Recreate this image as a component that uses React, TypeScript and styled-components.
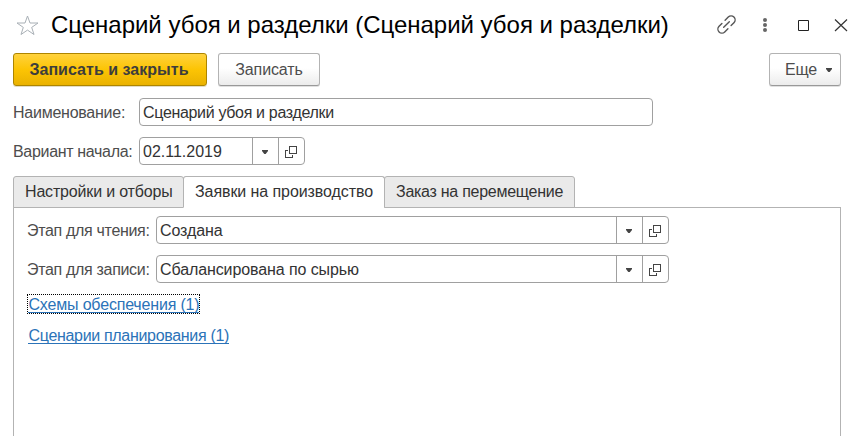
import React from "react";
import styled, { createGlobalStyle, css } from "styled-components";

const GlobalStyle = createGlobalStyle`
  *, *::before, *::after { box-sizing: border-box; }
  html, body { margin: 0; padding: 0; background: #fff; overflow: hidden; }
  body { font: 16px/20px "Liberation Sans", Arial, sans-serif; color: #333; }
  button, input { font: inherit; color: inherit; }
`;

const Window = styled.main`
  width: 864px;
  height: 436px;
  padding: 0 23px 0 13px;
  display: flex;
  flex-direction: column;
  overflow: hidden;
  background: #fff;
`;

const TitleBar = styled.header`
  height: 53px;
  flex: none;
  display: flex;
  align-items: flex-start;
  margin-right: -8px;
`;

const Title = styled.h1<{ $spacing: number }>`
  margin: 10px auto 0 10px;
  font-size: 24px;
  line-height: 30px;
  font-weight: 400;
  color: #000;
  white-space: nowrap;
  letter-spacing: ${(p) => p.$spacing}px;
`;

const TitleIcons = styled.div`
  display: flex;
  height: 50px;
`;

const Icon = styled.svg`
  display: block;
  flex: none;
`;

const Toolbar = styled.div`
  display: flex;
  flex: none;
  height: 33px;
  gap: 11px;
`;

const Button = styled.button<{ $primary?: boolean; $width: number; $right?: boolean; $spacing?: number }>`
  width: ${(p) => p.$width}px;
  height: 33px;
  padding: 1px 0 0;
  display: flex;
  align-items: center;
  justify-content: center;
  border: 1px solid #b3b3b3;
  border-bottom-color: #999;
  border-radius: 3px;
  color: #4d4d4d;
  background: linear-gradient(#fff 45%, #ececec);
  box-shadow: 0 1px 0 #e0e0e0;
  white-space: nowrap;
  letter-spacing: ${(p) => p.$spacing ?? 0}px;
  ${(p) => p.$right && css`margin-left: auto; gap: 9px; padding-left: 7px;`}
  ${(p) =>
    p.$primary &&
    css`
      padding-right: 2px;
      font-weight: 700;
      color: #3d3d3d;
      border-color: #ad8500;
      background: linear-gradient(#ffd23d, #fcc404 50%, #eab200);
      box-shadow: 0 1px 0 #e3dcc5;
    `}
`;

const Row = styled.div<{ $top: number; $label: number }>`
  display: grid;
  flex: none;
  grid-template-columns: ${(p) => p.$label}px max-content;
  align-items: center;
  height: 28px;
  margin-top: ${(p) => p.$top}px;
`;

const Label = styled.label<{ $spacing?: number }>`
  padding-top: 2px;
  color: #4d4d4d;
  white-space: nowrap;
  letter-spacing: ${(p) => p.$spacing ?? 0}px;
`;

const Field = styled.div<{ $width: number }>`
  display: flex;
  width: ${(p) => p.$width}px;
  height: 28px;
  border: 1px solid #a0a0a0;
  border-radius: 4px;
  background: #fff;
`;

const Input = styled.input<{ $spacing?: number }>`
  flex: 1;
  min-width: 0;
  padding: 2px 0 0 3px;
  border: 0;
  outline: 0;
  background: transparent;
  letter-spacing: ${(p) => p.$spacing ?? 0}px;
`;

const FieldButton = styled.button`
  width: 26px;
  height: 26px;
  padding: 2px 1px 0 0;
  display: grid;
  place-items: center;
  border: 0;
  border-left: 1px solid #a0a0a0;
  background: transparent;
`;

const Tabs = styled.div`
  display: flex;
  flex: none;
  height: 32px;
  margin-top: 11px;
  position: relative;
  z-index: 1;
`;

const Tab = styled.button<{ $active?: boolean; $width: number; $spacing?: number }>`
  width: ${(p) => p.$width}px;
  height: 32px;
  margin-right: -1px;
  padding: 0 0 1px 11px;
  text-align: left;
  white-space: nowrap;
  border: 1px solid #b3b3b3;
  border-bottom-color: ${(p) => (p.$active ? "#fff" : "#b3b3b3")};
  border-radius: 3px 3px 0 0;
  background: ${(p) => (p.$active ? "#fff" : "#eaeaea")};
  letter-spacing: ${(p) => p.$spacing ?? 0}px;
`;

const Panel = styled.section`
  flex: 1;
  margin-top: -1px;
  padding: 0 13px;
  border: 1px solid #b3b3b3;
  border-bottom: 0;
  display: flex;
  flex-direction: column;
  align-items: flex-start;
`;

const Link = styled.a<{ $focused?: boolean; $top: number; $spacing?: number }>`
  margin-top: ${(p) => p.$top}px;
  height: 20px;
  border: 1px dotted ${(p) => (p.$focused ? "#000" : "transparent")};
  color: #2b73b8;
  text-decoration: none;
  line-height: 20px;
  white-space: nowrap;
  letter-spacing: ${(p) => p.$spacing ?? 0}px;
  span { display: block; height: 18px; padding-left: 0.5px; border-bottom: 1px solid #2b73b8; }
`;

const Caret = () => (
  <Icon width="6" height="4" viewBox="0 0 6 4"><path d="M0 0h6v1L3.7 4H2.3L0 1z" fill="#444" /></Icon>
);

const OpenIcon = () => (
  <Icon width="12" height="12" viewBox="0 0 12 12" fill="none" stroke="#444" shapeRendering="crispEdges">
    <path d="M4.5.5h7v7h-7zM3 4.5H.5v7h7V9" />
  </Icon>
);

const Combo = ({ id, value, width, spacing }: { id: string; value: string; width: number; spacing?: number }) => (
  <Field $width={width}>
    <Input id={id} defaultValue={value} $spacing={spacing} />
    <FieldButton aria-label="Выбрать"><Caret /></FieldButton>
    <FieldButton aria-label="Открыть"><OpenIcon /></FieldButton>
  </Field>
);

export default function App() {
  return (
    <>
      <GlobalStyle />
      <Window>
        <TitleBar>
          <Icon width="28" height="50" viewBox="0 0 28 50" fill="none" stroke="#a9b0b6">
            <path d="M14.5 16l2.5 7h8l-6.3 4.4 2.3 7.1-6.5-4.4L8 34.5l2.3-7.1L4 23h8z" />
          </Icon>
          <Title $spacing={-0.02}>Сценарий убоя и разделки (Сценарий убоя и разделки)</Title>
          <TitleIcons>
            <Icon width="134" height="50" viewBox="715 0 134 50" fill="none">
              <g transform="translate(726.5 24.5) rotate(-45)" stroke="#555" strokeWidth="1.4" strokeLinecap="round">
                <path d="M-4 0H4M-2.5-4h-4a4 4 0 0 0 0 8h4.5M2-4h4.5a4 4 0 0 1 0 8h-4" />
              </g>
              <g fill="#666"><circle cx="765" cy="20" r="2" /><circle cx="765" cy="25" r="2" /><circle cx="765" cy="30" r="2" /></g>
              <path d="M798.5 20.5h10v10h-10z" stroke="#222" />
              <path d="M835 19.5l12 11.5M847 19.5L835 31" stroke="#333" strokeWidth="1.2" />
            </Icon>
          </TitleIcons>
        </TitleBar>
        <Toolbar>
          <Button $primary $width={194} $spacing={0.03}>Записать и закрыть</Button>
          <Button $width={102} $spacing={-0.1}>Записать</Button>
          <Button $width={72} $right $spacing={-0.2}>Еще <Caret /></Button>
        </Toolbar>
        <Row $top={12} $label={126}>
          <Label htmlFor="name" $spacing={-0.25}>Наименование:</Label>
          <Field $width={514}><Input id="name" defaultValue="Сценарий убоя и разделки" $spacing={-0.33} /></Field>
        </Row>
        <Row $top={11} $label={126}>
          <Label htmlFor="start" $spacing={-0.32}>Вариант начала:</Label>
          <Combo id="start" value="02.11.2019" width={166} />
        </Row>
        <Tabs>
          <Tab $width={171} $spacing={-0.17}>Настройки и отборы</Tab>
          <Tab $width={202} $active $spacing={-0.08}>Заявки на производство</Tab>
          <Tab $width={191} $spacing={-0.27}>Заказ на перемещение</Tab>
        </Tabs>
        <Panel>
          <Row $top={8} $label={129}>
            <Label htmlFor="read" $spacing={-0.32}>Этап для чтения:</Label>
            <Combo id="read" value="Создана" width={513} spacing={-0.1} />
          </Row>
          <Row $top={11} $label={129}>
            <Label htmlFor="write" $spacing={-0.32}>Этап для записи:</Label>
            <Combo id="write" value="Сбалансирована по сырью" width={513} spacing={-0.1} />
          </Row>
          <Link $top={11} $focused $spacing={-0.18}><span>Схемы обеспечения (1)</span></Link>
          <Link $top={11} $spacing={-0.32}><span>Сценарии планирования (1)</span></Link>
        </Panel>
      </Window>
    </>
  );
}
